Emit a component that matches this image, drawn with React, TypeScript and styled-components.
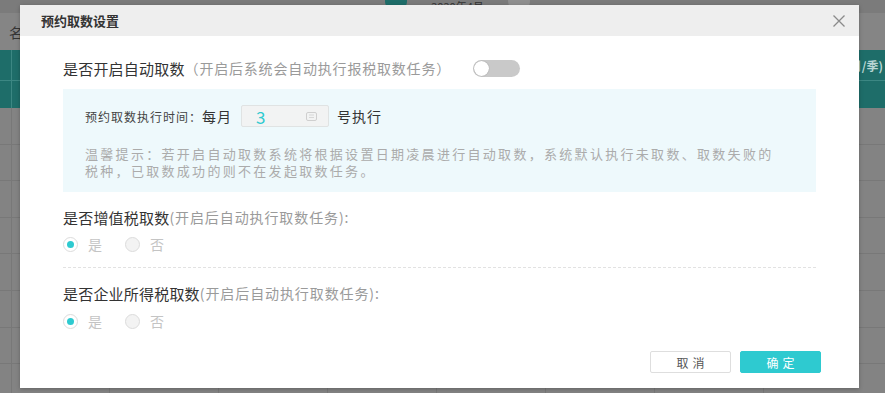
import styled, { createGlobalStyle } from "styled-components";

const GlobalStyle = createGlobalStyle`
  html, body {
    margin: 0;
    padding: 0;
    width: 885px;
    height: 393px;
    overflow: hidden;
    font-family: "Noto Sans CJK SC", "Noto Sans", sans-serif;
  }
`;

const Page = styled.div`
  position: relative;
  width: 885px;
  height: 393px;
  background: #838383;
  overflow: hidden;
`;

const TopBar = styled.div`
  height: 13px;
  background: #7b7b7b;
  display: flex;
  align-items: center;
  justify-content: center;
  gap: 24px;
  overflow: hidden;
  padding-left: 30px;
`;

const Dot = styled.div<{ $color: string }>`
  width: 22px;
  height: 22px;
  border-radius: 50%;
  background: ${(p) => p.$color};
  margin-top: -12px;
`;

const TopText = styled.span`
  font-size: 11px;
  line-height: 13px;
  color: #333;
`;

const FilterRow = styled.div`
  height: 37px;
  background: #858585;
  display: flex;
  align-items: center;
  padding: 0 0 0 9px;
  font-size: 14px;
  color: #353535;
`;

const Grid = styled.div`
  display: grid;
  grid-template-columns: 12px 98px repeat(6, 109px) 1fr;
`;

const HeadRow = styled(Grid)`
  height: 58px;
  background: #1e6d69;
`;

const HeadCell = styled.div`
  border-right: 1px solid #3c8783;
  display: flex;
  flex-direction: column;
  justify-content: flex-start;
  &:last-child {
    border-right: none;
  }
`;

const HeadSub = styled.div`
  height: 30px;
  border-bottom: 1px solid #3c8783;
  display: flex;
  align-items: center;
  justify-content: flex-end;
  padding-right: 2px;
  font-size: 12px;
  font-weight: bold;
  color: #b9d6d4;
  white-space: nowrap;
  overflow: hidden;
`;

const BodyRow = styled(Grid)`
  height: 36.6px;
  border-bottom: 1px solid #787878;
  box-sizing: border-box;
`;

const BodyCell = styled.div`
  border-right: 1px solid #787878;
  &:last-child {
    border-right: none;
  }
`;

const Modal = styled.div`
  position: absolute;
  left: 20px;
  top: 5px;
  width: 839px;
  height: 383px;
  background: #fff;
  display: flex;
  flex-direction: column;
  box-shadow: 0 1px 4px rgba(0, 0, 0, 0.25);
`;

const ModalHeader = styled.div`
  height: 31px;
  flex-shrink: 0;
  background: #eeeeee;
  display: flex;
  align-items: center;
  justify-content: space-between;
  padding: 0 13px 0 21px;
`;

const ModalTitle = styled.div`
  font-size: 13px;
  font-weight: bold;
  color: #333;
`;

const CloseBtn = styled.button`
  width: 14px;
  height: 14px;
  padding: 0;
  border: none;
  background: none;
  display: flex;
  cursor: pointer;
`;

const ModalBody = styled.div`
  flex: 1;
  display: flex;
  flex-direction: column;
  padding: 22px 43px 0 43px;
`;

const SwitchRow = styled.div`
  height: 20px;
  display: flex;
  align-items: center;
`;

const Label = styled.span`
  font-size: 15px;
  color: #333;
  letter-spacing: 0.2px;
  white-space: nowrap;
`;

const Hint = styled.span<{ $spacing?: number }>`
  font-size: 14px;
  color: #9a9a9a;
  letter-spacing: ${(p) => p.$spacing ?? 0.8}px;
  white-space: nowrap;
`;

const Toggle = styled.div`
  width: 47px;
  height: 17px;
  border-radius: 9px;
  background: #c9c9c9;
  margin-left: 22px;
  position: relative;
  flex-shrink: 0;
`;

const Knob = styled.div`
  position: absolute;
  left: 1px;
  top: 1px;
  width: 15px;
  height: 15px;
  border-radius: 50%;
  background: #fff;
  box-shadow: 0 0 1px rgba(0, 0, 0, 0.4);
`;

const InfoBox = styled.div`
  margin-top: 11px;
  height: 103px;
  box-sizing: border-box;
  background: #eef9fc;
  padding: 16px 22px 0 22px;
  display: flex;
  flex-direction: column;
`;

const TimeRow = styled.div`
  height: 22px;
  display: flex;
  align-items: center;
`;

const SmallLabel = styled.span`
  font-size: 12px;
  color: #444;
  letter-spacing: 1px;
  white-space: nowrap;
`;

const MidText = styled.span`
  font-size: 14px;
  color: #333;
  letter-spacing: 1px;
  white-space: nowrap;
`;

const DayInput = styled.div`
  width: 88px;
  height: 22px;
  box-sizing: border-box;
  margin: 0 8px 0 9px;
  background: #f2f3f3;
  border: 1px solid #e0e3e3;
  border-radius: 2px;
  display: flex;
  align-items: center;
  justify-content: space-between;
  padding: 0 11px 0 14px;
`;

const DayValue = styled.span`
  font-size: 17px;
  color: #2ecad0;
  line-height: 1;
`;

const Tip = styled.div`
  margin-top: 18px;
  display: flex;
  flex-direction: column;
`;

const TipLine = styled.div`
  height: 17px;
  font-size: 13px;
  line-height: 17px;
  letter-spacing: 2.3px;
  color: #ababab;
  white-space: nowrap;
`;

const SectionLabel = styled.div`
  margin-top: 15px;
  height: 20px;
  display: flex;
  align-items: center;
`;

const RadioRow = styled.div<{ $top: number }>`
  margin-top: ${(p) => p.$top}px;
  height: 18px;
  display: flex;
  align-items: center;
`;

const RadioItem = styled.label`
  display: flex;
  align-items: center;
  margin-right: 23px;
  font-size: 14px;
  color: #c4c4c4;
`;

const RadioCircle = styled.span<{ $checked?: boolean }>`
  width: 15px;
  height: 15px;
  border-radius: 50%;
  box-sizing: border-box;
  border: 1px solid #dcdcdc;
  background: ${(p) => (p.$checked ? "#fff" : "#f3f3f3")};
  display: flex;
  align-items: center;
  justify-content: center;
  margin-right: 10px;
  &::after {
    content: "";
    display: ${(p) => (p.$checked ? "block" : "none")};
    width: 7px;
    height: 7px;
    border-radius: 50%;
    background: #2ecad0;
  }
`;

const Divider = styled.div`
  margin-top: 14px;
  border-top: 1px dashed #e2e2e2;
`;

const Footer = styled.div`
  margin-top: auto;
  display: flex;
  justify-content: flex-end;
  gap: 9px;
  padding: 0 38px 15px 0;
`;

const Button = styled.button<{ $primary?: boolean }>`
  width: 81px;
  height: 22px;
  box-sizing: border-box;
  font-family: inherit;
  font-size: 12px;
  letter-spacing: 4px;
  padding: 0 0 0 4px;
  border-radius: 2px;
  border: 1px solid ${(p) => (p.$primary ? "#2ecad0" : "#dedede")};
  background: ${(p) => (p.$primary ? "#2ecad0" : "#fff")};
  color: ${(p) => (p.$primary ? "#fff" : "#555")};
  cursor: pointer;
`;

const Radio = ({ label, checked }: { label: string; checked?: boolean }) => (
  <RadioItem>
    <RadioCircle $checked={checked} />
    {label}
  </RadioItem>
);

const rows = Array.from({ length: 8 });
const cols = Array.from({ length: 9 });

export default function App() {
  return (
    <Page>
      <GlobalStyle />
      <TopBar>
        <Dot $color="#1e6d69" />
        <TopText>2020年4月</TopText>
        <Dot $color="#8f8f8f" />
      </TopBar>
      <FilterRow>名</FilterRow>
      <HeadRow>
        {cols.map((_, i) => (
          <HeadCell key={i}>
            <HeadSub>{i === 8 ? "月/季)" : ""}</HeadSub>
          </HeadCell>
        ))}
      </HeadRow>
      {rows.map((_, r) => (
        <BodyRow key={r}>
          {cols.map((_, i) => (
            <BodyCell key={i} />
          ))}
        </BodyRow>
      ))}

      <Modal>
        <ModalHeader>
          <ModalTitle>预约取数设置</ModalTitle>
          <CloseBtn aria-label="close">
            <svg width="14" height="14" viewBox="0 0 14 14">
              <path d="M1.5 1.5 L12.5 12.5 M12.5 1.5 L1.5 12.5" stroke="#8a8a8a" strokeWidth="1.3" fill="none" />
            </svg>
          </CloseBtn>
        </ModalHeader>
        <ModalBody>
          <SwitchRow>
            <Label>是否开启自动取数</Label>
            <Hint>（开启后系统会自动执行报税取数任务）</Hint>
            <Toggle>
              <Knob />
            </Toggle>
          </SwitchRow>

          <InfoBox>
            <TimeRow>
              <SmallLabel>预约取数执行时间：</SmallLabel>
              <MidText>每月</MidText>
              <DayInput>
                <DayValue>3</DayValue>
                <svg width="11" height="9" viewBox="0 0 11 9">
                  <rect x="0.5" y="0.5" width="10" height="8" rx="1.5" fill="none" stroke="#cfcfcf" />
                  <path d="M3 3 H8 M3 5.5 H8" stroke="#cfcfcf" strokeWidth="0.8" />
                </svg>
              </DayInput>
              <MidText>号执行</MidText>
            </TimeRow>
            <Tip>
              <TipLine>温馨提示：若开启自动取数系统将根据设置日期凌晨进行自动取数，系统默认执行未取数、取数失败的</TipLine>
              <TipLine>税种，已取数成功的则不在发起取数任务。</TipLine>
            </Tip>
          </InfoBox>

          <SectionLabel>
            <Label>是否增值税取数</Label>
            <Hint $spacing={0.9}>(开启后自动执行取数任务):</Hint>
          </SectionLabel>
          <RadioRow $top={8}>
            <Radio label="是" checked />
            <Radio label="否" />
          </RadioRow>

          <Divider />

          <SectionLabel>
            <Label>是否企业所得税取数</Label>
            <Hint $spacing={0.9}>(开启后自动执行取数任务):</Hint>
          </SectionLabel>
          <RadioRow $top={9}>
            <Radio label="是" checked />
            <Radio label="否" />
          </RadioRow>
        </ModalBody>
        <Footer>
          <Button>取消</Button>
          <Button $primary>确定</Button>
        </Footer>
      </Modal>
    </Page>
  );
}
